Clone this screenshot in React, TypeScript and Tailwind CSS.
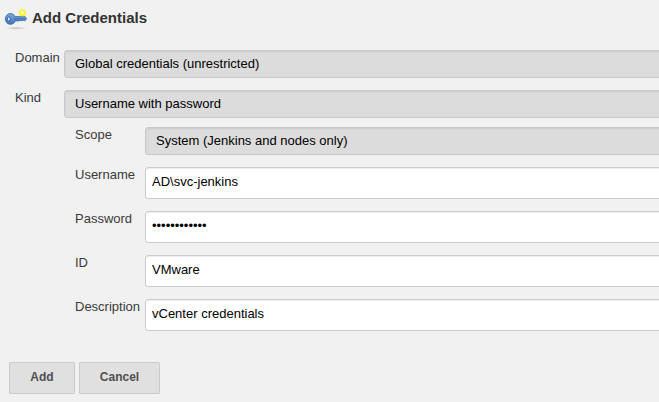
import React from "react";

function KeyIcon() {
  return (
    <svg width="24" height="24" viewBox="0 0 24 24" className="shrink-0">
      <defs>
        <linearGradient id="keyBlue" x1="0" y1="0" x2="0" y2="1">
          <stop offset="0" stopColor="#7ba6d8" />
          <stop offset="1" stopColor="#4379bc" />
        </linearGradient>
        <radialGradient id="keyShadow">
          <stop offset="0" stopColor="#000" stopOpacity="0.22" />
          <stop offset="1" stopColor="#000" stopOpacity="0" />
        </radialGradient>
      </defs>
      <ellipse cx="12" cy="20.2" rx="11" ry="1.5" fill="url(#keyShadow)" />
      <path
        d="M6.4 5.5C8.7 5.5 10.3 6.7 11.1 8.6H20.9L22.7 10.3L21.2 12.6H19.8L19 11.9L18.2 12.7H16.8L16 12L15.1 12.9H11.3C10.5 15 8.7 16.3 6.4 16.3C3.4 16.3 1.4 14 1.4 10.9C1.4 7.8 3.5 5.5 6.4 5.5Z"
        fill="url(#keyBlue)"
        stroke="#3468aa"
        strokeWidth="0.8"
      />
      <path d="M10.5 10.9H20.7" stroke="#2d5f9f" strokeWidth="0.7" />
      <ellipse cx="4.8" cy="11" rx="1.5" ry="2.1" fill="#dce8f4" stroke="#2a5890" strokeWidth="0.8" />
      <circle cx="18.4" cy="4.7" r="2.5" fill="#fffde0" stroke="#fcf33c" strokeWidth="2.3" />
    </svg>
  );
}

function Row({ label, labelWidth, children }: { label: string; labelWidth: string; children: React.ReactNode }) {
  return (
    <div className="flex items-start">
      <label className={`${labelWidth} -mt-px shrink-0 leading-[18px] text-[#3a3a3a]`}>{label}</label>
      {children}
    </div>
  );
}

function Select({ value }: { value: string }) {
  return (
    <div className="-mr-2 h-7 flex-1 rounded-[3px] border border-[#c9c9c9] bg-[#dcdcdc] pl-[10px] leading-[25px] text-black shadow-[inset_0_1px_2px_rgba(0,0,0,0.08)]">
      {value}
    </div>
  );
}

function Field({ value }: { value: string }) {
  return (
    <div className="-mr-2 h-8 flex-1 rounded-[3px] border border-[#ccc] bg-white pl-[6px] leading-[27px] text-black shadow-[inset_0_1px_1px_rgba(0,0,0,0.075)]">
      {value}
    </div>
  );
}

export default function App() {
  return (
    <main className="flex h-[402px] w-full flex-col overflow-hidden bg-[#f1f1f1] font-['Liberation_Sans',Arial,sans-serif] text-[13px]">
      <header className="flex h-[50px] shrink-0 items-start pt-2 pl-1">
        <KeyIcon />
        <h1 className="ml-1 text-[15px] leading-[20px] font-bold text-[#333]">Add Credentials</h1>
      </header>
      <div className="flex flex-col gap-3 pl-[15px]">
        <Row label="Domain" labelWidth="w-[49px]"><Select value="Global credentials (unrestricted)" /></Row>
        <Row label="Kind" labelWidth="w-[49px]"><Select value="Username with password" /></Row>
      </div>
      <div className="mt-[9px] flex flex-col gap-3 pl-[75px]">
        <Row label="Scope" labelWidth="w-[70px]"><Select value="System (Jenkins and nodes only)" /></Row>
        <Row label="Username" labelWidth="w-[70px]"><Field value="AD\svc-jenkins" /></Row>
        <Row label="Password" labelWidth="w-[70px]"><Field value="••••••••••••" /></Row>
        <Row label="ID" labelWidth="w-[70px]"><Field value="VMware" /></Row>
        <Row label="Description" labelWidth="w-[70px]"><Field value="vCenter credentials" /></Row>
      </div>
      <div className="mt-[31px] flex gap-1 pl-[9px] text-[12px] font-bold text-[#505050]">
        <button className="h-8 w-[66px] rounded-[1px] border border-[#ccc] bg-[#e0e0e0] pb-[2px]">Add</button>
        <button className="h-8 w-[81px] rounded-[1px] border border-[#ccc] bg-[#e0e0e0] pb-[2px]">Cancel</button>
      </div>
    </main>
  );
}
